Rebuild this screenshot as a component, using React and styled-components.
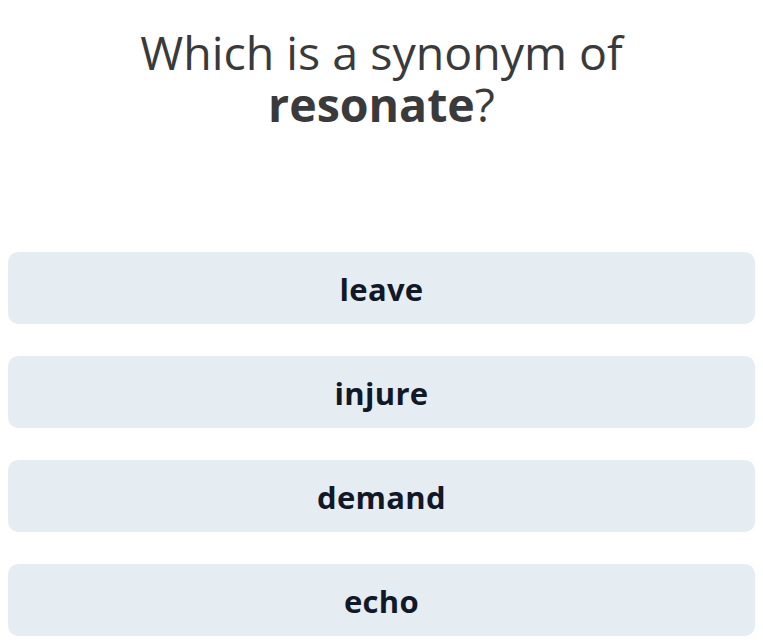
import React from "react";
import styled, { createGlobalStyle } from "styled-components";

const Global = createGlobalStyle`
  html, body { background: #ffffff; }
  body { margin: 8px; font-family: "Open Sans", "Noto Sans", sans-serif; }
`;

const Page = styled.div`
  display: flex;
  flex-direction: column;
`;

const Question = styled.h1`
  margin: 18px 0 0;
  font-size: 46.5px;
  font-weight: 400;
  line-height: 52px;
  text-align: center;
  color: #3a3a3c;
  padding: 0 110px;
`;

const Word = styled.b`
  font-weight: 700;
`;

const Options = styled.div`
  margin-top: 122px;
  display: flex;
  flex-direction: column;
  gap: 32px;
`;

const Option = styled.button`
  height: 72px;
  padding: 2px 0 0;
  border: none;
  border-radius: 10px;
  background: #e6edf2;
  font-family: "Open Sans", "Noto Sans", sans-serif;
  font-size: 31px;
  font-weight: 700;
  letter-spacing: 0.3px;
  color: #111827;
  cursor: pointer;
`;

const options = ["leave", "injure", "demand", "echo"];

export default function App() {
  return (
    <Page>
      <Global />
      <Question>
        Which is a synonym of <Word>resonate</Word>?
      </Question>
      <Options>
        {options.map((o) => (
          <Option key={o}>{o}</Option>
        ))}
      </Options>
    </Page>
  );
}
